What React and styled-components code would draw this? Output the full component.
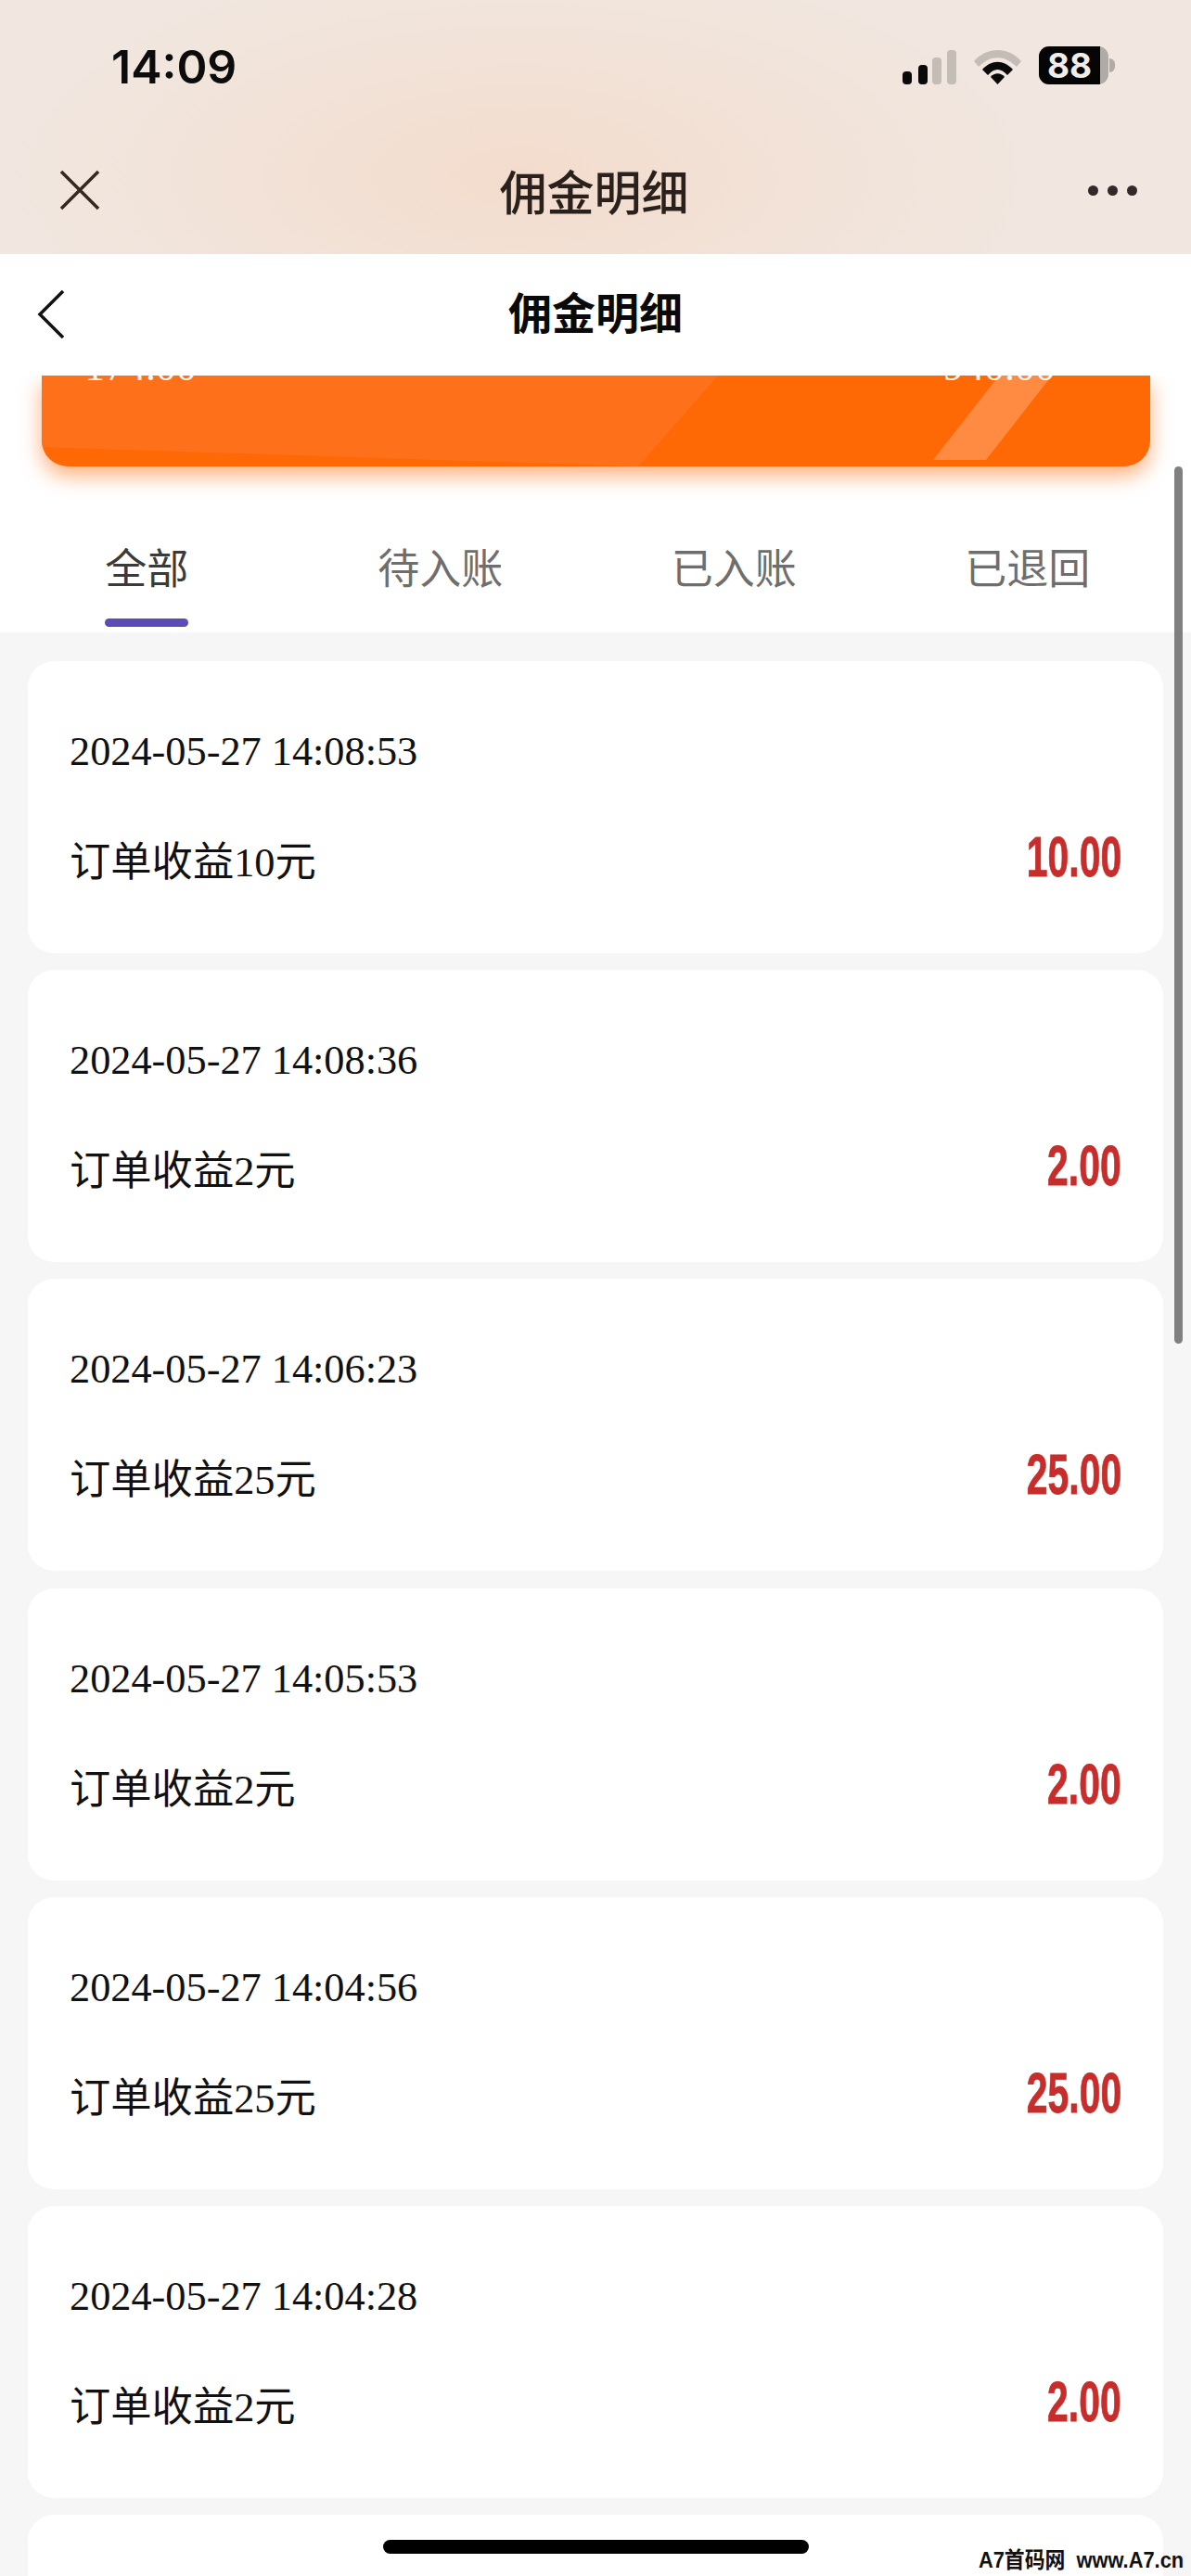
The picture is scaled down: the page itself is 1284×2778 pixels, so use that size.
import React from 'react'
import styled, { createGlobalStyle } from 'styled-components'

const Global = createGlobalStyle`
  html, body { margin: 0; padding: 0; background: #f6f6f6; }
  body { font-family: "Liberation Sans", "Noto Sans CJK SC", sans-serif; }
`

const Screen = styled.div`
  position: relative;
  width: 1284px;
  height: 2778px;
  overflow: hidden;
  background: #f6f6f6;
`

const Browser = styled.header`
  height: 274px;
  box-sizing: border-box;
  background:
    radial-gradient(ellipse 560px 240px at 560px 190px, #f3dccd 0%, rgba(243, 220, 205, 0) 100%),
    #f1e7e0;
`

const StatusBar = styled.div`
  height: 160px;
  box-sizing: border-box;
  padding: 50px 89px 0 120px;
  display: flex;
  justify-content: space-between;
  align-items: flex-start;
`

const Clock = styled.span`
  font-family: Inter, "Liberation Sans", sans-serif;
  font-size: 50px;
  line-height: 44px;
  font-weight: 600;
  color: #0c0c0c;
`

const StatusIcons = styled.div`
  display: flex;
  align-items: flex-start;
  gap: 19px;
`

const BrowserBar = styled.div`
  height: 114px;
  display: flex;
  align-items: center;
  justify-content: space-between;
  padding: 0 58px 24px 64px;
  box-sizing: border-box;
`

const BrowserTitle = styled.h1`
  margin: 0;
  font-size: 51px;
  line-height: 60px;
  font-weight: 500;
  color: #2a211c;
  font-family: "Noto Sans CJK SC", sans-serif;
`

const Dots = styled.div`
  display: flex;
  gap: 10px;
`

const Dot = styled.i`
  width: 11px;
  height: 11px;
  border-radius: 50%;
  background: #33292a;
`

const NavBar = styled.nav`
  position: relative;
  z-index: 2;
  height: 131px;
  padding-bottom: 10px;
  box-sizing: border-box;
  background: #fff;
  display: flex;
  align-items: center;
  justify-content: center;
`

const NavTitle = styled.h2`
  margin: 0;
  font-size: 47px;
  font-weight: 700;
  color: #0a0a0a;
  font-family: "Noto Sans CJK SC", sans-serif;
`

const BackIcon = styled.svg`
  position: absolute;
  left: 40px;
  top: 38px;
`

const Summary = styled.section`
  background: #fff;
  padding: 0 44px 0 45px;
  height: 98px;
`

const OrangeCard = styled.div`
  position: relative;
  height: 98px;
  background: #fe6805;
  border-radius: 0 0 28px 28px;
  box-shadow: 0 10px 22px rgba(255, 112, 20, 0.55);
  overflow: hidden;
  display: flex;
  justify-content: space-between;
  padding: 0 102px 0 46px;
  box-sizing: border-box;
  color: #fff6ec;
  font-family: "Liberation Serif", serif;
  font-size: 44px;
  &::before {
    content: "";
    position: absolute;
    inset: 0;
    background: #ff701b;
    clip-path: polygon(0 0, 729px 0, 643px 98px, 0 77px);
  }
  &::after {
    content: "";
    position: absolute;
    inset: 0;
    background: #ff8a42;
    clip-path: polygon(1032px 0, 1089px 0, 1018px 91px, 961px 91px);
  }
`

const ClippedAmount = styled.span`
  position: relative;
  z-index: 1;
  line-height: 40px;
  margin-top: -29px;
`

const Tabs = styled.div`
  background: #fff;
  height: 179px;
  width: 1284px;
  display: flex;
  padding-right: 18px;
  box-sizing: border-box;
`

const Tab = styled.div`
  flex: 1;
  display: flex;
  justify-content: center;
  padding-top: 78px;
  box-sizing: border-box;
  position: relative;
  font-size: 45px;
  line-height: 60px;
  height: 100%;
  color: ${p => (p.$active ? '#3a3a3a' : '#6e6e6e')};
  font-family: "Noto Sans CJK SC", sans-serif;
  font-weight: 400;
  ${p => p.$active && `
    &::after {
      content: "";
      position: absolute;
      left: 113px;
      width: 90px;
      top: 164px;
      height: 9px;
      border-radius: 5px;
      background: #5b4cb8;
    }
  `}
`

const List = styled.div`
  display: flex;
  flex-direction: column;
  gap: 18.2px;
  padding: 31px 30px 0;
`

const Card = styled.article`
  height: 315px;
  flex-shrink: 0;
  box-sizing: border-box;
  background: #fff;
  border-radius: 28px;
  padding: 68px 45px 0;
`

const DateText = styled.div`
  font-family: "Liberation Serif", serif;
  font-size: 44.3px;
  line-height: 60px;
  color: #111;
`

const Row = styled.div`
  display: flex;
  justify-content: space-between;
  align-items: flex-start;
  margin-top: 60px;
`

const Label = styled.div`
  font-family: "Liberation Serif", "Noto Sans CJK SC", serif;
  font-size: 44.3px;
  line-height: 60px;
  color: #111;
`

const Amount = styled.div`
  font-family: "Liberation Sans", sans-serif;
  font-weight: 700;
  font-size: 62px;
  line-height: 46px;
  color: #c62d2b;
  transform: scaleX(0.66);
  transform-origin: right center;
  -webkit-text-stroke: 0.8px #c62d2b;
`

const ScrollThumb = styled.div`
  position: absolute;
  left: 1266px;
  top: 503px;
  width: 9px;
  height: 946px;
  border-radius: 5px;
  background: #808080;
  z-index: 3;
`

const HomeBar = styled.div`
  position: absolute;
  left: 413px;
  top: 2739px;
  width: 459px;
  height: 15px;
  border-radius: 8px;
  background: #000;
  z-index: 3;
`

const Watermark = styled.div`
  position: absolute;
  right: 8px;
  top: 2749px;
  font-family: "Liberation Sans", "Noto Sans CJK SC", sans-serif;
  font-size: 24px;
  line-height: 24px;
  font-weight: 700;
  color: #111;
  z-index: 3;
  white-space: pre;
  transform: scaleX(0.91);
  transform-origin: right center;
`

const rows = [
  ['2024-05-27 14:08:53', '订单收益10元', '10.00'],
  ['2024-05-27 14:08:36', '订单收益2元', '2.00'],
  ['2024-05-27 14:06:23', '订单收益25元', '25.00'],
  ['2024-05-27 14:05:53', '订单收益2元', '2.00'],
  ['2024-05-27 14:04:56', '订单收益25元', '25.00'],
  ['2024-05-27 14:04:28', '订单收益2元', '2.00'],
]

const Signal = () => (
  <svg width="58" height="37" viewBox="0 0 58 37" style={{ marginTop: 4 }}>
    <rect x="0" y="23" width="10" height="14" rx="4" fill="#0a0a0a" />
    <rect x="17" y="16" width="10" height="21" rx="4" fill="#0a0a0a" />
    <rect x="32" y="8" width="10" height="29" rx="4" fill="#c4bcb6" />
    <rect x="48" y="0" width="10" height="37" rx="4" fill="#c4bcb6" />
  </svg>
)

const Wifi = () => (
  <svg width="51" height="37" viewBox="0 0 51 37" style={{ marginTop: 4 }}>
    <path d="M0 12 C14 -4 37 -4 51 12 L46 18 C33 5 18 5 5 18 Z" fill="#c4bcb6" />
    <path d="M9 21 C19 10 32 10 42 21 L36 27 C29 19 22 19 15 27 Z" fill="#0a0a0a" />
    <path d="M18 29 C22 24 29 24 33 29 L25.5 37 Z" fill="#0a0a0a" />
  </svg>
)

const BatteryShell = styled.div`
  position: relative;
  width: 75px;
  height: 41px;
  border-radius: 11px;
  background: #b0aba6;
`

const BatteryFill = styled.div`
  width: 66px;
  height: 41px;
  border-radius: 11px 0 0 11px;
  background: #050505;
  color: #f1ece8;
  font-family: Inter, "Liberation Sans", sans-serif;
  font-size: 37px;
  line-height: 41px;
  font-weight: 700;
  text-align: center;
`

const BatteryCap = styled.i`
  position: absolute;
  right: -7px;
  top: 13px;
  width: 6px;
  height: 15px;
  border-radius: 0 8px 8px 0;
  background: #b0aba6;
`

export default function App() {
  return (
    <Screen>
      <Global />
      <Browser>
        <StatusBar>
          <Clock>14:09</Clock>
          <StatusIcons>
            <Signal />
            <Wifi />
            <BatteryShell>
              <BatteryFill>88</BatteryFill>
              <BatteryCap />
            </BatteryShell>
          </StatusIcons>
        </StatusBar>
        <BrowserBar>
          <svg width="44" height="44" viewBox="0 0 44 44">
            <path d="M2 2 L42 42 M42 2 L2 42" stroke="#33291f" strokeWidth="3.5" fill="none" />
          </svg>
          <BrowserTitle>佣金明细</BrowserTitle>
          <Dots><Dot /><Dot /><Dot /></Dots>
        </BrowserBar>
      </Browser>
      <NavBar>
        <BackIcon width="30" height="54" viewBox="0 0 30 54">
          <path d="M28 2 L3 27 L28 52" stroke="#111" strokeWidth="3.5" fill="none" />
        </BackIcon>
        <NavTitle>佣金明细</NavTitle>
      </NavBar>
      <Summary>
        <OrangeCard>
          <ClippedAmount>174.00</ClippedAmount>
          <ClippedAmount>940.00</ClippedAmount>
        </OrangeCard>
      </Summary>
      <Tabs>
        <Tab $active>全部</Tab>
        <Tab>待入账</Tab>
        <Tab>已入账</Tab>
        <Tab>已退回</Tab>
      </Tabs>
      <List>
        {rows.map(r => (
          <Card key={r[0]}>
            <DateText>{r[0]}</DateText>
            <Row>
              <Label>{r[1]}</Label>
              <Amount>{r[2]}</Amount>
            </Row>
          </Card>
        ))}
        <Card />
      </List>
      <ScrollThumb />
      <HomeBar />
      <Watermark>A7首码网  www.A7.cn</Watermark>
    </Screen>
  )
}
